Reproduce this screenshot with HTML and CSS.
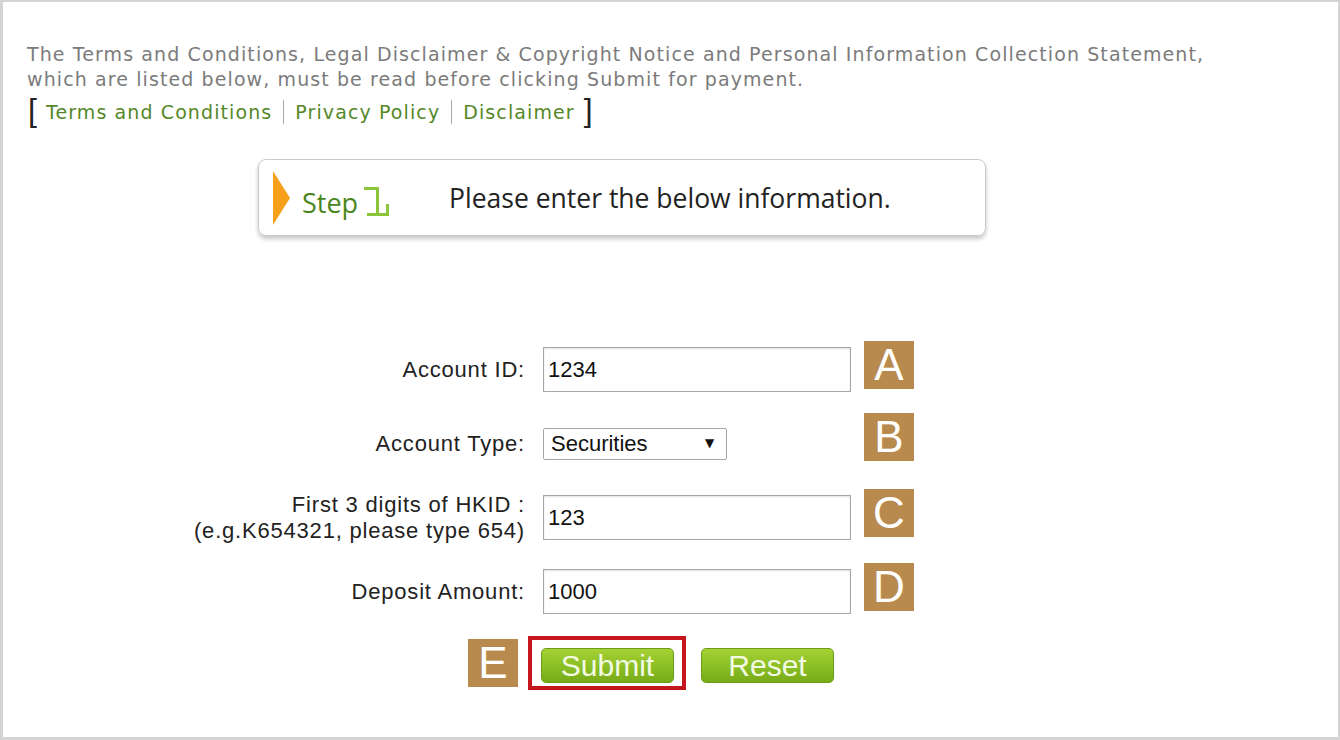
FILE: index.html
```html
<!DOCTYPE html>
<html lang="en">
<head>
    <meta charset="UTF-8">
    <meta name="viewport" content="width=device-width, initial-scale=1.0">
    <title>Deposit</title>
    <link rel="stylesheet" href="styles.css">
</head>
<body>
<div class="frame">

    <p class="intro">The Terms and Conditions, Legal Disclaimer &amp; Copyright Notice and Personal Information Collection Statement,<br>which are listed below, must be read before clicking Submit for payment.</p>

    <div class="links">
        <span class="bracket">[</span>
        <a href="#">Terms and Conditions</a>
        <span class="sep"></span>
        <a href="#">Privacy Policy</a>
        <span class="sep"></span>
        <a href="#">Disclaimer</a>
        <span class="bracket">]</span>
    </div>

    <div class="step">
        <span class="arrow"></span>
        <span class="step-word">Step</span>
        <svg class="step-num" width="26" height="32" viewBox="0 0 26 32">
            <path d="M1 3.5 H14.5 V29.5 M4 29.5 H24.5 V19" fill="none" stroke="#8cc43c" stroke-width="3"/>
        </svg>
        <span class="step-text">Please enter the below information.</span>
    </div>

    <form class="form" onsubmit="return false">
        <div class="row">
            <label class="label" for="account">Account ID:</label>
            <input class="field" type="text" id="account" value="1234">
            <span class="badge">A</span>
        </div>
        <div class="row">
            <label class="label" for="type">Account Type:</label>
            <div class="select-wrap">
                <select id="type">
                    <option>Securities</option>
                </select>
            </div>
            <span class="badge badge-b">B</span>
        </div>
        <div class="row">
            <label class="label" for="hkid">First 3 digits of HKID :<br>(e.g.K654321, please type 654)</label>
            <input class="field" type="text" id="hkid" value="123">
            <span class="badge">C</span>
        </div>
        <div class="row">
            <label class="label" for="amount">Deposit Amount:</label>
            <input class="field" type="text" id="amount" value="1000">
            <span class="badge">D</span>
        </div>

        <div class="actions">
            <span class="badge badge-e">E</span>
            <div class="highlight">
                <button class="btn" type="submit">Submit</button>
            </div>
            <button class="btn btn-reset" type="reset">Reset</button>
        </div>
    </form>

</div>
</body>
</html>
```

FILE: styles.css
```css
body {
    margin: 0;
    background-color: #fff;
}

.frame {
    width: 1340px;
    height: 740px;
    box-sizing: border-box;
    border: 2px solid #d4d4d4;
    border-left-width: 3px;
    border-bottom-width: 3px;
    overflow: hidden;
}

.intro {
    margin: 0;
    padding: 40px 0 0 24px;
    font: 19px/25px "DejaVu Sans", Verdana, sans-serif;
    letter-spacing: 1.1px;
    color: #7b7b7b;
}

/* links row with brackets */
.links {
    display: flex;
    align-items: center;
    height: 32px;
    margin: 4px 0 0 25px;
    font: 19px "DejaVu Sans", Verdana, sans-serif;
    letter-spacing: 1.1px;
}

.links a {
    color: #558828;
    text-decoration: none;
}

.bracket {
    font: 32px/32px "Liberation Sans", Arial, sans-serif;
    color: #222;
    margin-top: -4px;
}

.bracket:first-child {
    margin-right: 8px;
}

.bracket:last-child {
    margin-left: 9px;
}

.sep {
    width: 1px;
    height: 24px;
    background-color: #a8a8a8;
    margin: 0 11px;
}

/* step banner */
.step {
    display: flex;
    align-items: center;
    width: 728px;
    height: 77px;
    box-sizing: border-box;
    margin: 31px 0 0 255px;
    border: 1px solid #cacaca;
    border-radius: 8px;
    box-shadow: 0 3px 4px rgba(0, 0, 0, 0.22);
}

.arrow {
    width: 0;
    height: 0;
    margin-left: 14px;
    border-left: 17px solid #f7a01c;
    border-top: 27px solid transparent;
    border-bottom: 27px solid transparent;
}

.step-word {
    margin-left: 12px;
    margin-top: 10px;
    font: 27px "Open Sans", sans-serif;
    color: #4b861d;
}

.step-num {
    margin-left: 5px;
    margin-top: 6px;
}

.step-text {
    margin-left: 60px;
    font: 26.5px "Open Sans", sans-serif;
    color: #222;
}

/* form */
.form {
    margin: 105px 0 0 0;
    font-family: "Liberation Sans", Arial, sans-serif;
}

.row {
    display: flex;
    align-items: center;
    height: 48px;
    margin-bottom: 26px;
}

.label {
    width: 340px;
    margin: 9px 18px 0 182px;
    text-align: right;
    font-size: 22px;
    line-height: 26px;
    letter-spacing: 0.8px;
    color: #222;
}

.field {
    width: 308px;
    height: 45px;
    box-sizing: border-box;
    margin: 9px 13px 0 0;
    padding: 0 4px;
    border: 1px solid #a6a6a6;
    box-shadow: inset 0 1px 2px rgba(0, 0, 0, 0.12);
    font: 22px "Liberation Sans", Arial, sans-serif;
    color: #111;
}

.select-wrap {
    position: relative;
    width: 308px;
    margin: 9px 13px 0 0;
}

.select-wrap select {
    width: 184px;
    height: 32px;
    padding: 0 0 0 7px;
    border: 1px solid #a6a6a6;
    border-radius: 2px;
    background-color: #fff;
    font: 22px "Liberation Sans", Arial, sans-serif;
    color: #111;
    appearance: none;
    -webkit-appearance: none;
}

.select-wrap::after {
    content: "\25BC";
    position: absolute;
    left: 162px;
    top: 8px;
    font: 12px "DejaVu Sans", sans-serif;
    color: #111;
    pointer-events: none;
}

.badge {
    width: 50px;
    height: 48px;
    background-color: #b98a4e;
    color: #fff;
    font: 44px/48px "Liberation Sans", Arial, sans-serif;
    text-align: center;
}

.badge-b {
    margin-top: -4px;
}

/* buttons */
.actions {
    display: flex;
    align-items: flex-start;
    margin: -1px 0 0 465px;
}

.badge-e {
    margin-top: 3px;
}

.highlight {
    margin-left: 10px;
    padding: 8px 8px 3px 9px;
    border: 4px solid #c5161d;
}

.btn {
    width: 133px;
    height: 35px;
    padding: 0;
    border: 1px solid #6b9e18;
    border-radius: 5px;
    background: linear-gradient(#a6d134, #8cc026 50%, #78ab18);
    color: #f3fae4;
    font: 30px/33px "Liberation Sans", Arial, sans-serif;
    text-align: center;
    cursor: pointer;
}

.btn-reset {
    margin: 12px 0 0 15px;
}
```
